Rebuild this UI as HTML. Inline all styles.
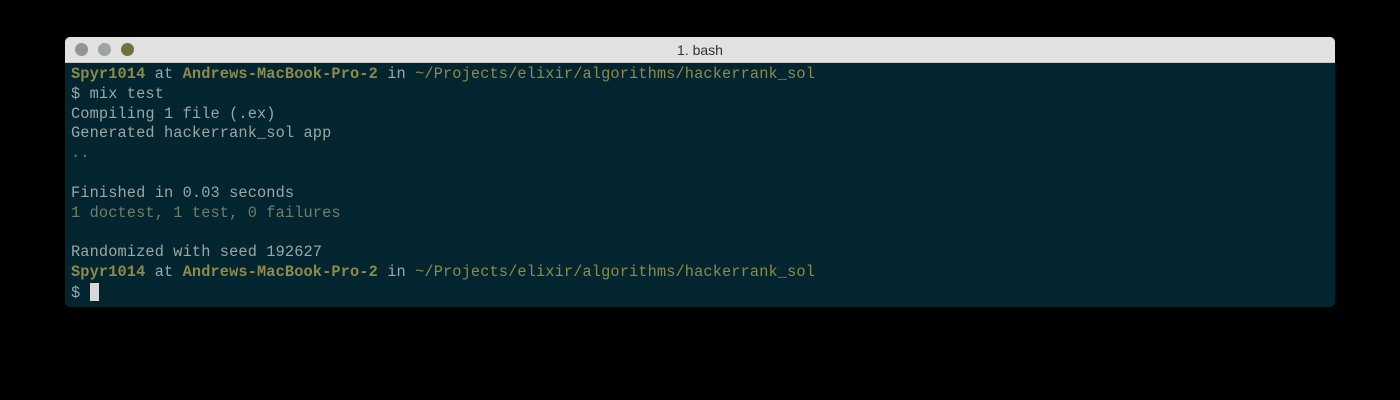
<!DOCTYPE html>
<html><head><style>
html,body{margin:0;padding:0;background:#000;width:1400px;height:400px;overflow:hidden}
.win{position:absolute;left:65px;top:37px;width:1270px;height:270px;border-radius:5px;overflow:hidden;background:#03252f}
.tb{height:26px;background:#e1e1e1;position:relative;border-bottom:1px solid #c8c8c8;box-sizing:border-box}
.dot{position:absolute;top:6px;width:13px;height:13px;border-radius:50%}
.title{position:absolute;left:0;right:0;top:5px;text-align:center;font:14px "Liberation Sans",sans-serif;color:#333}
.term{position:absolute;left:6px;top:28px;font:15.3px/19.8px "Liberation Mono",monospace;letter-spacing:0.12px;color:#9aa7a3;white-space:pre}
.y{color:#8d8b49;font-weight:bold}
.g{color:#6f7f65}
.cur{display:inline-block;width:9px;height:18px;background:#d8d8d8;vertical-align:-4px}
</style></head><body>
<div class="win">
<div class="tb">
<div class="dot" style="left:10px;background:#8f9494"></div>
<div class="dot" style="left:33px;background:#9ea3a3"></div>
<div class="dot" style="left:56px;background:#71703f"></div>
<div class="title">1. bash</div>
</div>
<div class="term"><span class="y">Spyr1014</span> at <span class="y">Andrews-MacBook-Pro-2</span> in <span style="color:#8d8b49">~/Projects/elixir/algorithms/hackerrank_sol</span>
$ mix test
Compiling 1 file (.ex)
Generated hackerrank_sol app
<span class="g">..</span>

Finished in 0.03 seconds
<span class="g">1 doctest, 1 test, 0 failures</span>

Randomized with seed 192627
<span class="y">Spyr1014</span> at <span class="y">Andrews-MacBook-Pro-2</span> in <span style="color:#8d8b49">~/Projects/elixir/algorithms/hackerrank_sol</span>
$ <span class="cur"></span></div>
</div>
</body></html>
